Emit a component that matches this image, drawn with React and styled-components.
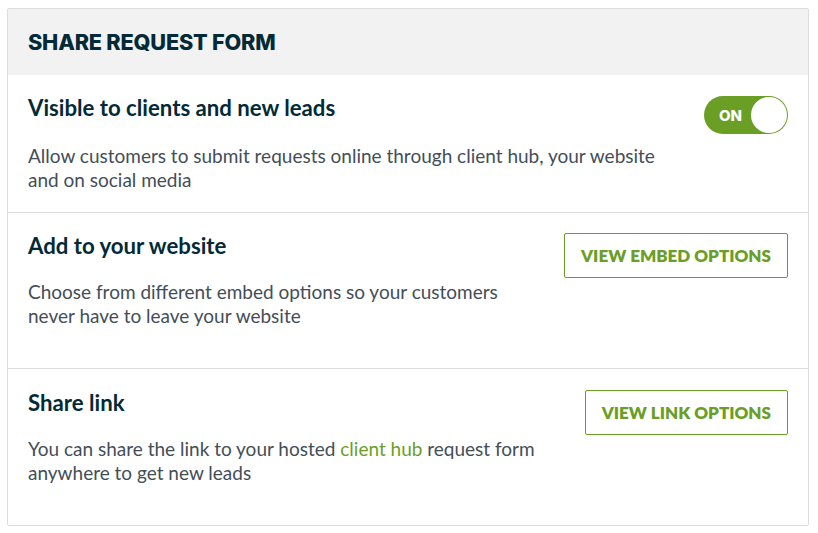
import React from 'react'
import styled, { createGlobalStyle } from 'styled-components'

const GlobalStyle = createGlobalStyle`
  body {
    margin: 0;
    background: #ffffff;
    font-family: 'Lato', sans-serif;
  }
`

const Page = styled.div`
  padding: 8px 9px 7px 7px;
`

const Card = styled.div`
  border: 1px solid #dcdcdc;
  border-radius: 2px;
  background: #fff;
`

const Header = styled.div`
  height: 66px;
  display: flex;
  align-items: center;
  padding: 0 20px;
  background: #f2f2f2;
`

const HeaderTitle = styled.h1`
  margin: 0;
  font-family: 'Inter', sans-serif;
  font-size: 21.7px;
  font-weight: 800;
  letter-spacing: -0.2px;
  color: #032a36;
`

const Section = styled.div`
  display: flex;
  justify-content: space-between;
  align-items: flex-start;
  padding: ${(p) => p.pad || '20px'};
  border-top: ${(p) => (p.first ? 'none' : '1px solid #dcdcdc')};
`

const Body = styled.div`
  display: flex;
  flex-direction: column;
  gap: ${(p) => p.gap || '21px'};
  max-width: ${(p) => p.maxWidth || '645px'};
`

const Title = styled.h2`
  margin: 0;
  font-size: 22.2px;
  line-height: 26px;
  font-weight: 700;
  color: #032a36;
`

const Text = styled.p`
  margin: 0;
  font-size: 19px;
  line-height: 24px;
  color: #434e58;
`

const Link = styled.a`
  color: #6a9e25;
  text-decoration: none;
`

const Toggle = styled.div`
  width: 84px;
  height: 38px;
  box-sizing: border-box;
  border-radius: 19px;
  background: #6a9e25;
  display: flex;
  align-items: center;
  justify-content: space-between;
  padding: 0 1px 0 15px;
  margin-top: 1px;
`

const ToggleLabel = styled.span`
  font-family: 'Inter', sans-serif;
  font-weight: 800;
  font-size: 15px;
  color: #fff;
`

const Knob = styled.span`
  width: 36px;
  height: 36px;
  border-radius: 50%;
  background: #fff;
`

const Button = styled.button`
  height: 45px;
  padding: 0 16px;
  background: #fff;
  border: 1px solid #6a9e25;
  border-radius: 2px;
  font-family: 'Lato', sans-serif;
  font-weight: 800;
  font-size: 17px;
  color: #6a9e25;
  cursor: pointer;
`

export default function App() {
  return (
    <>
      <GlobalStyle />
      <Page>
        <Card>
          <Header>
            <HeaderTitle>SHARE REQUEST FORM</HeaderTitle>
          </Header>
          <Section first pad="20px 20px 20px 20px">
            <Body gap="23px">
              <Title>Visible to clients and new leads</Title>
              <Text>
                Allow customers to submit requests online through client hub, your website and on social media
              </Text>
            </Body>
            <Toggle>
              <ToggleLabel>ON</ToggleLabel>
              <Knob />
            </Toggle>
          </Section>
          <Section pad="20px 20px 40px 20px">
            <Body maxWidth="495px">
              <Title>Add to your website</Title>
              <Text>
                Choose from different embed options so your customers never have to leave your website
              </Text>
            </Body>
            <Button>VIEW EMBED OPTIONS</Button>
          </Section>
          <Section pad="21px 20px 40px 20px">
            <Body maxWidth="540px">
              <Title>Share link</Title>
              <Text>
                You can share the link to your hosted <Link href="#">client hub</Link> request form anywhere to get new leads
              </Text>
            </Body>
            <Button>VIEW LINK OPTIONS</Button>
          </Section>
        </Card>
      </Page>
    </>
  )
}
